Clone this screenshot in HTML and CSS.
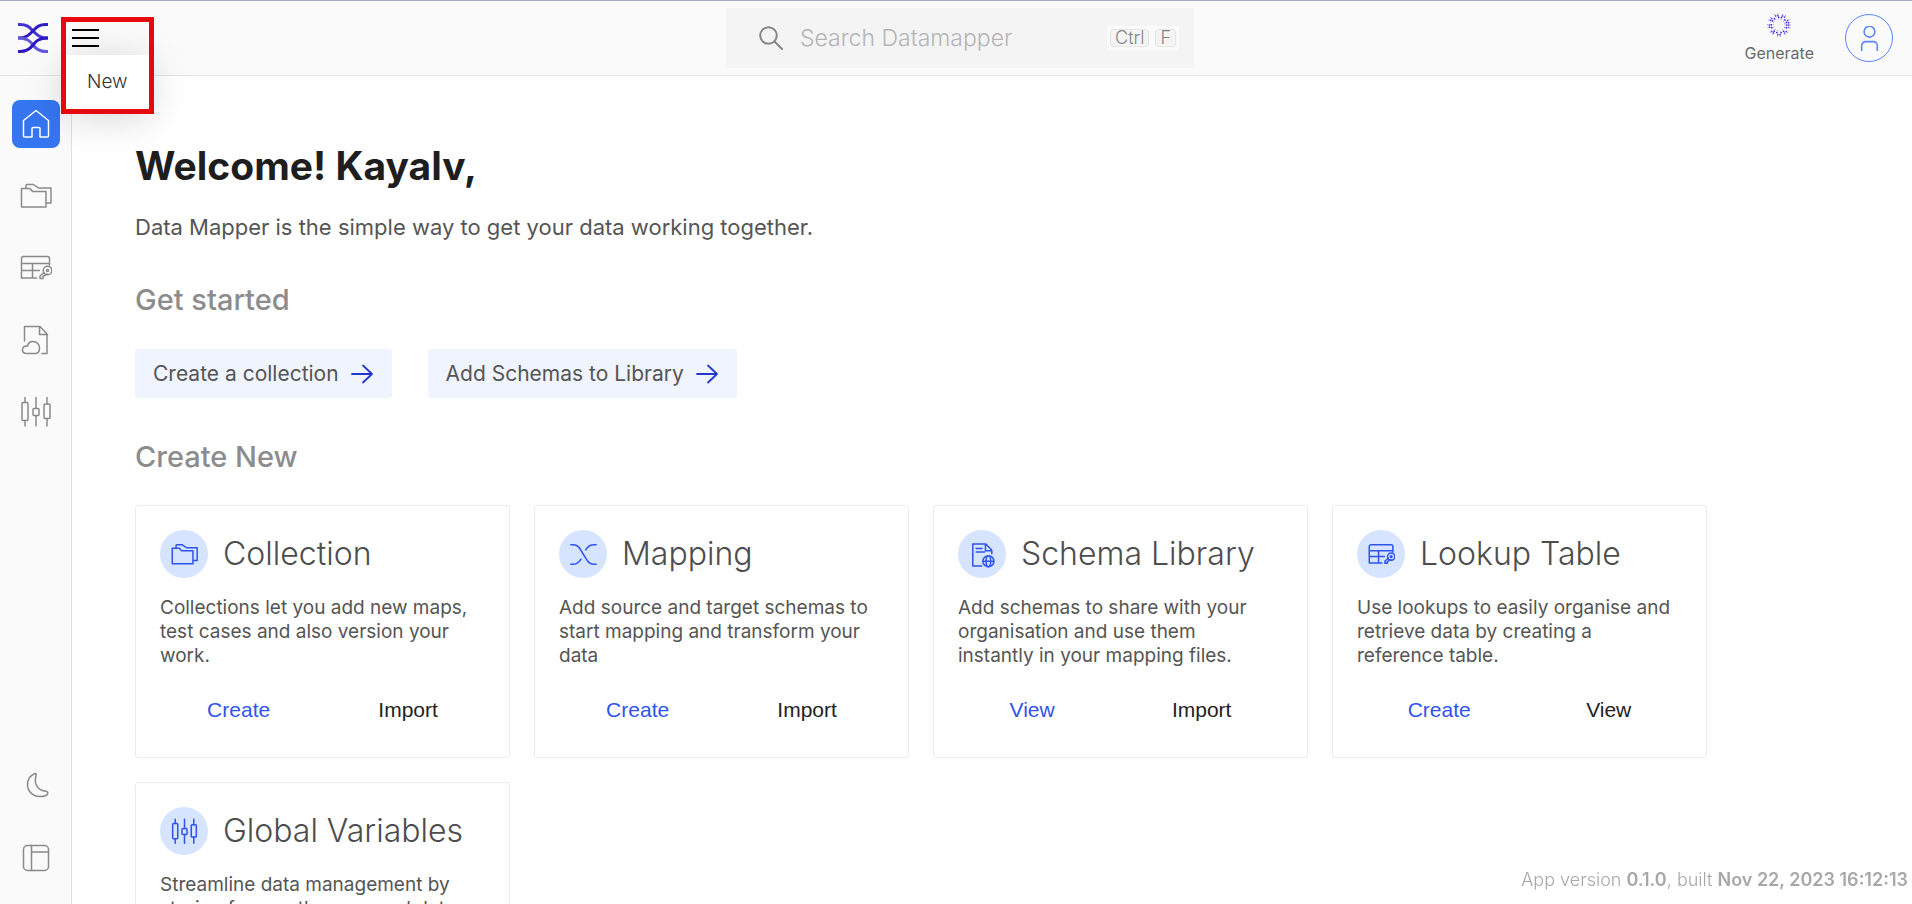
FILE: index.html
```html
<!DOCTYPE html>
<html lang="en">
<head>
<meta charset="utf-8">
<meta name="viewport" content="width=device-width, initial-scale=1">
<title>Data Mapper</title>
<link rel="stylesheet" href="styles.css">
</head>
<body>
<svg class="sprite" aria-hidden="true">
  <symbol id="i-folders" viewBox="0 0 32 32"><path d="M1.500 8.500H10l2.500 3H26v15.500H1.500zM6 8.500V5.500a1 1 0 0 1 1-1h6.500l5 3.500H31v15h-5"/></symbol>
  <symbol id="i-lookup" viewBox="0 0 32 32"><path d="M29.500 13V6.500a2 2 0 0 0-2-2H3.500a2 2 0 0 0-2 2v19.500h15M1.500 11.500h28M1.500 18.500h18M12.500 11.500v14.500M24 20.500l-4 3.500v2.500h3v-2l4-2.500"/><circle cx="27.500" cy="18.500" r="4.300"/><circle cx="27.500" cy="18.500" r="1"/></symbol>
  <symbol id="i-cloudfile" viewBox="0 0 32 32"><path d="M4.500 17V2.500H20l7 7.500v19.500h-5M19.500 2.500v8h8M6.500 29.500h9c3 0 4-2.500 4-5.500 0-4-3-6.500-6.500-6.500-3 0-5 2-5.500 4.500-3-.500-5 1-5 4 0 2 1.500 3.500 4 3.500z"/></symbol>
  <symbol id="i-sliders" viewBox="0 0 32 32"><path d="M5 1.500v5M5 24.500v5.500M16 1.500v11M16 19.500v10.500M27 1.500v6.500M27 22.500v7.500"/><rect x="2" y="6.500" width="6" height="18" rx="1"/><rect x="13" y="12.500" width="6" height="7" rx="1"/><rect x="24" y="8" width="6" height="14.500" rx="1"/></symbol>
  <symbol id="i-mapping" viewBox="0 0 32 32"><path d="M1 4.500h3c6 0 8 5 12 11.500s6 11.500 12 11.500h3M31 4.500h-2.500c-4.500 0-7.500 2-10 6M1 27.500h3.500c3.500 0 6-2 8.500-6"/></symbol>
  <symbol id="i-schema" viewBox="0 0 32 32"><path d="M15 29.500H4.500v-26H20l7 7.500v4M19.500 3.500v8H27M8.500 9h7M8.500 13h10"/><circle cx="23" cy="24" r="6.500"/><ellipse cx="23" cy="24" rx="2.700" ry="6.500"/><path d="M16.500 24h13"/></symbol>
  <symbol id="i-arrow" viewBox="0 0 24 24"><path d="M2 12h19.500M13 3.500l9 8.500-9 8.500"/></symbol>
</svg>

<header class="topbar">
  <div class="topbar-left">
    <svg class="logo" viewBox="0 0 30 30" aria-label="Data Mapper logo" role="img">
      <g fill="none" stroke-width="3">
        <path stroke="#4430d4" d="M0 1.500h2C10 1.500 12 5 15 8s6 7 15 7"/>
        <path stroke="#2f1cc4" d="M30 1.500h-2C20 1.500 18 5 15 8s-6 7-15 7"/>
        <path stroke="#6358da" d="M0 15c9 0 12 3 15 7s6 6.500 13 6.500h2"/>
        <path stroke="#2c16c8" d="M30 15c-9 0-12 3-15 7S9 28.500 2 28.500H0"/>
      </g>
    </svg>
    <div class="menu">
      <button class="menu-toggle" type="button" aria-label="Menu" aria-expanded="true"><span></span><span></span><span></span></button>
      <div class="menu-pop"><button type="button">New</button></div>
      <div class="highlight"></div>
    </div>
  </div>
  <label class="search">
    <svg viewBox="0 0 24 24" class="search-icon" aria-hidden="true"><circle cx="9.500" cy="9.500" r="8.300"/><path d="M15.500 15.500l7.500 7.500"/></svg>
    <input type="text" placeholder="Search Datamapper" aria-label="Search Datamapper">
    <span class="keys"><kbd>Ctrl</kbd><kbd>F</kbd></span>
  </label>
  <div class="topbar-right">
    <button class="generate" type="button">
      <svg viewBox="0 0 24 24" aria-hidden="true">
        <g fill="none" stroke-linecap="round">
          <circle cx="12" cy="12" r="6" stroke="#7a62ea" stroke-width="1" stroke-dasharray="0 2.700"/>
          <circle cx="12" cy="12" r="7.800" stroke="#3a20c8" stroke-width="1.700" stroke-dasharray="0 2.900 0 4.300"/>
          <circle cx="12" cy="12" r="9.700" stroke="#5a35f0" stroke-width="1.700" stroke-dasharray="0 2.300 0 4.700"/>
          <circle cx="12" cy="12" r="11.300" stroke="#7a62ea" stroke-width="1" stroke-dasharray="0 3.100 0 5"/>
        </g>
      </svg>
      <span>Generate</span>
    </button>
    <button class="avatar" type="button" aria-label="Account">
      <svg viewBox="0 0 24 24" aria-hidden="true"><circle cx="12" cy="5.500" r="5.200"/><path d="M4.500 23.500v-4.500a4 4 0 0 1 4-4h7a4 4 0 0 1 4 4v4.500"/></svg>
    </button>
  </div>
</header>

<div class="shell">
  <nav class="sidebar" aria-label="Main">
    <div class="side-group">
      <a class="side-item active" href="#" aria-label="Home"><svg viewBox="0 0 32 32"><path d="M3.500 12.500 16 2.500l12.500 10V28a1 1 0 0 1-1 1H20V20.500a1 1 0 0 0-1-1h-6a1 1 0 0 0-1 1V29H4.500a1 1 0 0 1-1-1z"/></svg></a>
      <a class="side-item" href="#" aria-label="Collections"><svg><use href="#i-folders"/></svg></a>
      <a class="side-item" href="#" aria-label="Lookup tables"><svg><use href="#i-lookup"/></svg></a>
      <a class="side-item" href="#" aria-label="Schema library"><svg><use href="#i-cloudfile"/></svg></a>
      <a class="side-item" href="#" aria-label="Global variables"><svg><use href="#i-sliders"/></svg></a>
    </div>
    <div class="side-group">
      <button class="side-item" type="button" aria-label="Dark mode"><svg viewBox="0 0 32 32"><path d="M15 3.500c-5 2-7.500 6-7.500 11C7.500 21.500 13 26.500 20 26.500c3.500 0 6.500-1 7.500-2.500.800-1.300 0-2.500-1.500-2.700C18.500 20.500 13.500 15 16 5.500c.400-1.500.200-2.300-1-2z"/></svg></button>
      <button class="side-item" type="button" aria-label="Toggle panel"><svg viewBox="0 0 32 32"><rect x="3.500" y="3.500" width="25" height="25" rx="4"/><path d="M11.500 3.500v25M11.500 10h17"/></svg></button>
    </div>
  </nav>

  <main class="content">
    <h1>Welcome! Kayalv,</h1>
    <p class="intro">Data Mapper is the simple way to get your data working together.</p>
    <h2>Get started</h2>
    <div class="quick">
      <button type="button">Create a collection <svg><use href="#i-arrow"/></svg></button>
      <button type="button">Add Schemas to Library <svg><use href="#i-arrow"/></svg></button>
    </div>
    <h2>Create New</h2>
    <div class="cards">
      <article class="card">
        <div class="card-head"><span class="disc"><svg><use href="#i-folders"/></svg></span><h3>Collection</h3></div>
        <p>Collections let you add new maps,<br>test cases and also version your<br>work.</p>
        <div class="actions"><button class="primary" type="button">Create</button><button type="button">Import</button></div>
      </article>
      <article class="card">
        <div class="card-head"><span class="disc"><svg><use href="#i-mapping"/></svg></span><h3>Mapping</h3></div>
        <p>Add source and target schemas to<br>start mapping and transform your<br>data</p>
        <div class="actions"><button class="primary" type="button">Create</button><button type="button">Import</button></div>
      </article>
      <article class="card">
        <div class="card-head"><span class="disc"><svg><use href="#i-schema"/></svg></span><h3>Schema Library</h3></div>
        <p>Add schemas to share with your<br>organisation and use them<br>instantly in your mapping files.</p>
        <div class="actions"><button class="primary" type="button">View</button><button type="button">Import</button></div>
      </article>
      <article class="card">
        <div class="card-head"><span class="disc"><svg><use href="#i-lookup"/></svg></span><h3>Lookup Table</h3></div>
        <p>Use lookups to easily organise and<br>retrieve data by creating a<br>reference table.</p>
        <div class="actions"><button class="primary" type="button">Create</button><button type="button">View</button></div>
      </article>
      <article class="card">
        <div class="card-head"><span class="disc"><svg><use href="#i-sliders"/></svg></span><h3>Global Variables</h3></div>
        <p>Streamline data management by<br>storing frequently accessed data</p>
        <div class="actions"><button class="primary" type="button">Create</button><button type="button">View</button></div>
      </article>
    </div>
  </main>
</div>
<footer class="version">App version <b>0.1.0</b>, built <b>Nov 22, 2023 16:12:13</b></footer>
</body>
</html>
```
FILE: styles.css
```css
* { box-sizing: border-box; }

body {
  margin: 0;
  height: 100vh;
  display: flex;
  flex-direction: column;
  overflow: hidden;
  background: #fff;
  color: #555;
  font-family: Inter, "Open Sans", sans-serif;
}

h1, h2, h3, p { margin: 0; }
button { border: 0; padding: 0; background: none; color: inherit; font: inherit; cursor: pointer; }
svg { fill: none; stroke: currentColor; stroke-linecap: round; stroke-linejoin: round; }
.sprite { position: absolute; width: 0; height: 0; }

/* top bar */
.topbar {
  display: grid;
  grid-template-columns: 1fr auto 1fr;
  align-items: center;
  flex: none;
  height: 76px;
  padding: 0 19px 0 18px;
  background: #fafafa;
  border-top: 1px solid #a3acc9;
  border-bottom: 1px solid #e4e4e4;
}
.topbar-left, .topbar-right { display: flex; align-items: center; }
.topbar-left { gap: 24px; }
.topbar-right { justify-content: flex-end; gap: 31px; }
.logo { width: 30px; height: 30px; stroke-linecap: butt; }

.menu { position: relative; z-index: 2; }
.menu-toggle { display: flex; flex-direction: column; gap: 6px; width: 27px; }
.menu-toggle span { height: 2px; background: #000; }
.menu-pop {
  position: absolute;
  z-index: -1;
  top: 26px;
  left: -6px;
  width: 83px;
  padding: 14px 0 14px 21px;
  background: #fff;
  box-shadow: 0 8px 40px rgba(0, 0, 0, .18);
}
.menu-pop button { display: block; font-size: 19px; line-height: 26px; font-weight: 300; color: #333; }
.highlight {
  position: absolute;
  top: -12px;
  left: -11px;
  width: 93px;
  height: 97px;
  border: 5px solid #e60a0a;
  pointer-events: none;
}

.search {
  display: flex;
  align-items: center;
  width: 468px;
  height: 60px;
  margin: -11px 0 -11px 9px;
  padding: 0 15px 0 33px;
  background: #f4f4f4;
}
.search-icon { flex: none; width: 24px; height: 24px; stroke: #868686; stroke-width: 2; }
.search input {
  flex: 1;
  min-width: 0;
  margin: 0 0 0 17px;
  padding: 0;
  border: 0;
  outline: 0;
  background: none;
  font: 300 23px/32px Inter, sans-serif;
  color: #555;
}
.search input::placeholder { color: #b4b4b4; opacity: 1; }
.keys { display: flex; gap: 6px; padding: 3px; background: #fafafa; }
.keys kbd {
  padding: 0 4px;
  border: 1px solid #e6e6e6;
  border-radius: 3px;
  background: #f4f4f4;
  font: 300 18px/16px Inter, sans-serif;
  color: #858585;
}

.generate { display: flex; flex-direction: column; align-items: center; gap: 6px; font-size: 16px; line-height: 20px; color: #6b6b6b; }
.generate svg { width: 24px; height: 24px; }
.avatar {
  display: grid;
  place-items: center;
  width: 48px;
  height: 48px;
  border: 1px solid #5b85ff;
  border-radius: 50%;
  color: #5b85ff;
}
.avatar svg { width: 25px; height: 25px; stroke-width: 1.500; }

/* layout */
.shell { display: flex; flex: 1; min-height: 0; }
.sidebar {
  display: flex;
  flex-direction: column;
  justify-content: space-between;
  flex: none;
  width: 72px;
  padding: 24px 11px 22px 12px;
  background: #fafafa;
  border-right: 1px solid #e0e0e0;
}
.side-group { display: flex; flex-direction: column; gap: 24px; }
.side-item { display: grid; place-items: center; width: 48px; height: 48px; border-radius: 8px; color: #8a8a8a; }
.side-item svg { width: 32px; height: 32px; stroke-width: 1.500; }
.side-item.active { background: #3575f0; color: #fff; }

.content { flex: 1; min-width: 0; overflow: hidden; padding: 64px 63px 0; }
h1 { font-size: 39px; line-height: 52px; font-weight: 700; color: #1e1e1e; }
.intro { margin-top: 21px; font-size: 22px; line-height: 28px; color: #555; }
h2 { margin-top: 41px; font-size: 29px; line-height: 36px; font-weight: 500; color: #8c8c8c; }
.quick { display: flex; gap: 36px; margin-top: 31px; }
.quick button {
  display: flex;
  align-items: center;
  gap: 11px;
  height: 49px;
  padding: 0 18px;
  border-radius: 3px;
  background: #f0f4ff;
  font-size: 21px;
}
.quick svg { width: 24px; height: 24px; stroke: #2138c8; stroke-width: 1.800; }

.cards { display: grid; grid-template-columns: repeat(auto-fill, 375px); gap: 24px; margin-top: 30px; }
.card { height: 253px; padding: 24px; border: 1px solid #ececec; border-radius: 3px; }
.card-head { display: flex; align-items: center; gap: 15px; }
.disc { display: grid; place-items: center; width: 48px; height: 48px; border-radius: 50%; background: #d6e4ff; color: #2f54eb; }
.disc svg { width: 27px; height: 27px; stroke-width: 1.800; }
.card h3 { font-size: 32px; line-height: 40px; font-weight: 300; color: #4d4d4d; }
.card p { min-height: 72px; margin-top: 18px; font-size: 19px; line-height: 24px; white-space: nowrap; }
.actions { display: flex; justify-content: space-around; gap: 14px; margin-top: 30px; font: 21px/24px "Liberation Sans", Arial, sans-serif; color: #222; }
.actions .primary { color: #2f54eb; }

.version { position: fixed; right: 4px; bottom: 11px; font-size: 18px; line-height: 26px; font-weight: 300; color: #a8a8a8; }
.version b { font-weight: 600; }
```
